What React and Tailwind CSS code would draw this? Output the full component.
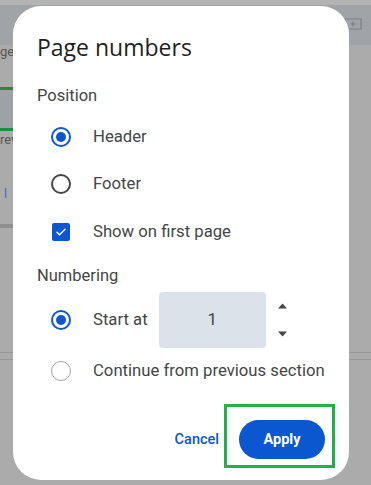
import React, { useState } from 'react'

function Radio({ checked, muted }) {
  if (checked) {
    return (
      <span className="w-5 h-5 shrink-0 rounded-full border-2 border-[#0b57d0] flex items-center justify-center">
        <span className="w-[10px] h-[10px] rounded-full bg-[#0b57d0]" />
      </span>
    )
  }
  return (
    <span
      className={
        muted
          ? 'w-5 h-5 shrink-0 rounded-full border-[1.5px] border-[#a3a3a3]'
          : 'w-5 h-5 shrink-0 rounded-full border-2 border-[#444746]'
      }
    />
  )
}

function Checkbox() {
  return (
    <span className="w-[18px] h-[18px] shrink-0 rounded-[2px] bg-[#0b57d0] flex items-center justify-center">
      <svg width="12" height="12" viewBox="0 0 24 24" fill="none">
        <path d="M4 12.5l5 5L20 6.5" stroke="white" strokeWidth="3" strokeLinecap="round" strokeLinejoin="round" />
      </svg>
    </span>
  )
}

function Backdrop() {
  return (
    <div className="flex flex-col h-full">
      <div className="h-[5px] bg-[#b3b3b3]" />
      <div className="h-[40px] bg-[#a0a4a9] flex justify-end items-start pt-[13px] pr-[9px]">
        <svg width="18" height="14" viewBox="0 0 18 14" fill="none">
          <path d="M1 1h16v10H4l-3 2.5z" stroke="#7d7f82" strokeWidth="1.2" />
          <path d="M9 3.5v5M6.5 6h5" stroke="#7d7f82" strokeWidth="1.2" />
        </svg>
      </div>
      <div className="flex-1 bg-[#ababab] flex flex-col">
        <div className="h-[42px] flex items-start">
          <span className="text-[13px] leading-[13px] mt-[0px] text-[#555]">ge</span>
        </div>
        <div className="w-[13px] h-[44px] border-y-[3px] border-[#1e8e3e] bg-[#9ea2a7]" />
        <div className="h-[97px] flex flex-col">
          <span className="text-[13px] leading-[13px] mt-[2px] text-[#555]">rev</span>
          <span className="text-[12px] leading-[12px] mt-[42px] ml-[4px] text-[#2f6fd0]">l</span>
          <div className="mt-auto w-[13px] h-[4px] bg-[#8e8e8e]" />
        </div>
        <div className="h-[124px]" />
        <div className="h-[1px] bg-[#979797]" />
        <div className="h-[6px]" />
        <div className="h-[1px] bg-[#979797]" />
      </div>
    </div>
  )
}

export default function App() {
  const [pos, setPos] = useState('header')
  const [value] = useState(1)

  return (
    <div
      className="relative w-[371px] h-[485px] overflow-hidden"
      style={{ fontFamily: 'Roboto, "Liberation Sans", sans-serif' }}
    >
      <Backdrop />

      {/* Dialog */}
      <div className="absolute left-[13px] top-[6px] w-[336px] h-[474px] bg-white rounded-[28px] flex flex-col pt-[27px] px-[24px]">
        <h2
          className="h-[28px] leading-[28px] text-[23px] text-[#1f1f1f]"
          style={{ fontFamily: '"Open Sans", Roboto, sans-serif' }}
        >
          Page numbers
        </h2>

        <div className="mt-[25px] h-[20px] leading-[20px] text-[16.5px] text-[#444746]">Position</div>

        <div className="mt-[7px] flex flex-col">
          <button onClick={() => setPos('header')} className="h-[47px] flex items-center pl-[14px] gap-[22px]">
            <Radio checked={pos === 'header'} />
            <span className="text-[16.7px] text-[#444746]">Header</span>
          </button>
          <button onClick={() => setPos('footer')} className="h-[47px] flex items-center pl-[14px] gap-[22px]">
            <Radio checked={pos === 'footer'} />
            <span className="text-[16.7px] text-[#444746]">Footer</span>
          </button>
          <div className="h-[49px] flex items-center pl-[15px] gap-[23px]">
            <Checkbox />
            <span className="text-[16.7px] text-[#444746]">Show on first page</span>
          </div>
        </div>

        <div className="mt-[10px] h-[20px] leading-[20px] text-[16.5px] text-[#444746]">Numbering</div>

        <div className="mt-[6px] h-[56px] flex items-center pl-[14px]">
          <Radio checked />
          <span className="ml-[22px] text-[16.7px] text-[#444746]">Start at</span>
          <div className="ml-[11px] w-[107px] h-[56px] rounded-[4px] bg-[#dbe2e9] flex items-center justify-center text-[17px] text-[#444746]">
            {value}
          </div>
          <div className="ml-[12px] h-[34px] flex flex-col justify-between">
            <svg width="9" height="6" viewBox="0 0 9 6">
              <path d="M0 5.5L4.5 0.5L9 5.5z" fill="#444746" />
            </svg>
            <svg width="9" height="6" viewBox="0 0 9 6">
              <path d="M0 0.5L4.5 5.5L9 0.5z" fill="#444746" />
            </svg>
          </div>
        </div>

        <div className="mt-[3px] h-[40px] flex items-center pl-[14px] gap-[22px]">
          <Radio muted />
          <span className="text-[16.7px] text-[#444746] whitespace-nowrap">Continue from previous section</span>
        </div>

        <div className="mt-[29px] flex justify-end items-center gap-[20px]">
          <button className="text-[14.5px] font-medium text-[#0b57d0]">Cancel</button>
          <div className="relative">
            <button className="w-[86px] h-[39px] rounded-full bg-[#0b57d0] text-white text-[14.5px] font-bold">
              Apply
            </button>
            <div className="absolute -left-[15px] -right-[10px] -top-[16px] -bottom-[9px] border-[3px] border-[#22b14c] pointer-events-none" />
          </div>
        </div>
      </div>
    </div>
  )
}
